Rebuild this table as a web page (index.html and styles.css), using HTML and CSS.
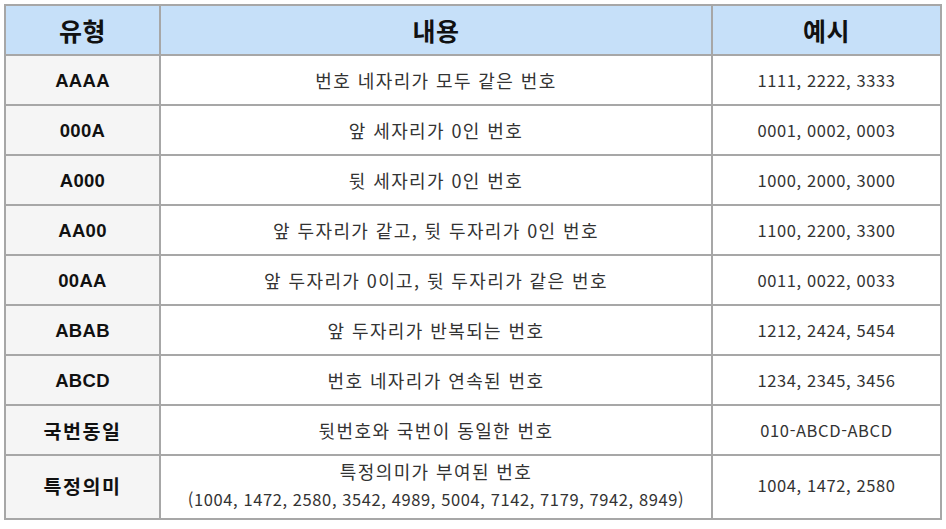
FILE: index.html
```html
<!DOCTYPE html>
<html lang="ko">
<head>
<meta charset="utf-8">
<link rel="stylesheet" href="styles.css">
</head>
<body>
<div class="wrap">
<table class="grid">
  <colgroup>
    <col class="c1"><col class="c2"><col class="c3">
  </colgroup>
  <thead>
    <tr><th>유형</th><th>내용</th><th>예시</th></tr>
  </thead>
  <tbody>
    <tr><td class="type">AAAA</td><td class="desc">번호 네자리가 모두 같은 번호</td><td class="ex">1111, 2222, 3333</td></tr>
    <tr><td class="type">000A</td><td class="desc">앞 세자리가 0인 번호</td><td class="ex">0001, 0002, 0003</td></tr>
    <tr><td class="type">A000</td><td class="desc">뒷 세자리가 0인 번호</td><td class="ex">1000, 2000, 3000</td></tr>
    <tr><td class="type">AA00</td><td class="desc">앞 두자리가 같고, 뒷 두자리가 0인 번호</td><td class="ex">1100, 2200, 3300</td></tr>
    <tr><td class="type">00AA</td><td class="desc">앞 두자리가 0이고, 뒷 두자리가 같은 번호</td><td class="ex">0011, 0022, 0033</td></tr>
    <tr><td class="type">ABAB</td><td class="desc">앞 두자리가 반복되는 번호</td><td class="ex">1212, 2424, 5454</td></tr>
    <tr><td class="type">ABCD</td><td class="desc">번호 네자리가 연속된 번호</td><td class="ex">1234, 2345, 3456</td></tr>
    <tr><td class="type ko">국번동일</td><td class="desc">뒷번호와 국번이 동일한 번호</td><td class="ex">010-ABCD-ABCD</td></tr>
    <tr class="tall"><td class="type ko">특정의미</td><td class="desc">특정의미가 부여된 번호<br><span class="nums">(1004, 1472, 2580, 3542, 4989, 5004, 7142, 7179, 7942, 8949)</span></td><td class="ex">1004, 1472, 2580</td></tr>
  </tbody>
</table>
</div>
</body>
</html>
```
FILE: styles.css
```css
html, body {
  margin: 0;
  padding: 0;
  background: #ffffff;
}
.wrap {
  padding: 4px 0 0 4px;
}
.grid {
  border-collapse: collapse;
  table-layout: fixed;
  width: 936px;
  font-family: "Noto Sans CJK KR", "Noto Sans", sans-serif;
  color: #333333;
}
.c1 { width: 155px; }
.c2 { width: 552px; }
.c3 { width: 229px; }
.grid th, .grid td {
  border: 2px solid #a7a7a7;
  text-align: center;
  vertical-align: middle;
  padding: 0;
}
.grid th {
  background: #c6e0f9;
  color: #111111;
  font-size: 25px;
  font-weight: 700;
  height: 48px;
  line-height: 30px;
  letter-spacing: 0.5px;
}
.grid td {
  height: 48px;
  line-height: 27px;
}
.grid td.desc {
  font-size: 18px;
  letter-spacing: 1.4px;
}
.grid td.ex,
.grid .nums {
  font-size: 16.5px;
  letter-spacing: 0.6px;
}
.grid td.type {
  background: #f5f5f5;
  color: #111111;
  font-family: "Liberation Sans", Arial, sans-serif;
  font-weight: 700;
  font-size: 18.5px;
  letter-spacing: 0.3px;
}
.grid td.type.ko {
  font-family: "Noto Sans CJK KR", sans-serif;
  font-size: 19.5px;
  letter-spacing: 1.5px;
}
.grid tr.tall td {
  height: 58px;
  padding-bottom: 4px;
}
```
